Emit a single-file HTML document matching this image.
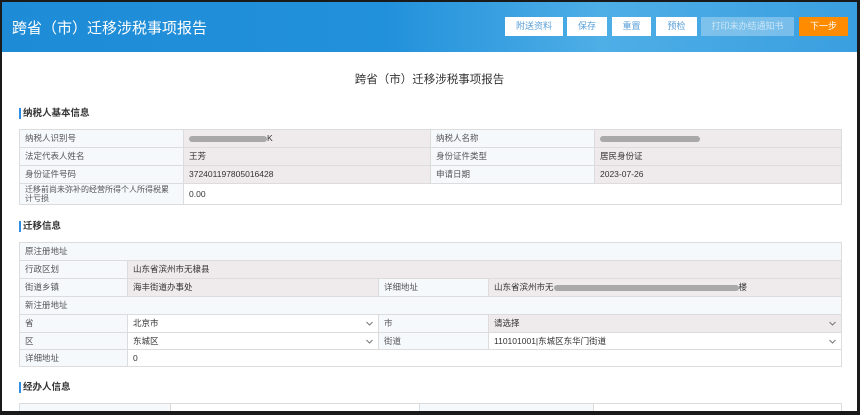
<!DOCTYPE html>
<html><head><meta charset="utf-8"><style>
*{margin:0;padding:0;box-sizing:border-box}
body{width:860px;height:415px;background:#1a1a1a;position:relative;overflow:hidden;font-family:"Liberation Sans","Noto Sans CJK SC",sans-serif}
.page{position:absolute;left:2px;top:2px;width:855px;height:409px;background:#fff;overflow:hidden}
.hdr{position:absolute;left:0;top:0;width:855px;height:50px;background:linear-gradient(90deg,#1e8bd6 0%,#2291db 45%,#4eaee6 70%,#3a9fe0 100%)}
.hdr .t{position:absolute;left:10px;top:15px;color:#fff;font-size:15px}
.btn{position:absolute;top:15px;height:19px;background:#fff;color:#5a9fd8;font-size:9px;text-align:center;line-height:19px}
.abs{position:absolute}
.sec{position:absolute;left:17px;font-size:9.5px;font-weight:bold;color:#333;border-left:2px solid #2f8de4;padding-left:2px;line-height:11px}
.c{position:absolute;border:1px solid #dcdcdc;font-size:8.5px;color:#555;padding-left:5px;display:flex;align-items:center;line-height:9px}
.l{background:#f5f9fc}
.g{background:#efeaeb;color:#333}
.w{background:#fff;color:#333}
.chev{position:absolute;right:5px;top:6px;width:7px;height:5px}
.blur{display:inline-block;height:6px;background:#a9a9a9;border-radius:3px;vertical-align:middle}
</style></head><body>
<div class="page">
<div class="hdr"><div class="t">跨省（市）迁移涉税事项报告</div>
<div class="btn" style="left:503px;width:58px">附送资料</div>
<div class="btn" style="left:565px;width:40px">保存</div>
<div class="btn" style="left:610px;width:39px">重置</div>
<div class="btn" style="left:654px;width:41px">预检</div>
<div class="btn" style="left:699px;width:93px;background:rgba(255,255,255,0.3);color:rgba(255,255,255,0.6)">打印未办结通知书</div>
<div class="btn" style="left:797px;width:49px;background:#ff8c00;color:#fff">下一步</div>
</div>
<div class="abs" style="left:0;width:855px;top:69px;text-align:center;font-size:11.5px;color:#333">跨省（市）迁移涉税事项报告</div>

<div class="sec" style="top:106px">纳税人基本信息</div>
<div class="c l" style="left:17px;top:127px;width:165px;height:19px">纳税人识别号</div>
<div class="c g" style="left:181px;top:127px;width:248px;height:19px"><span class="blur" style="width:78px"></span>K</div>
<div class="c l" style="left:428px;top:127px;width:165px;height:19px">纳税人名称</div>
<div class="c g" style="left:592px;top:127px;width:248px;height:19px"><span class="blur" style="width:100px"></span></div>
<div class="c l" style="left:17px;top:145px;width:165px;height:19px">法定代表人姓名</div>
<div class="c g" style="left:181px;top:145px;width:248px;height:19px">王芳</div>
<div class="c l" style="left:428px;top:145px;width:165px;height:19px">身份证件类型</div>
<div class="c g" style="left:592px;top:145px;width:248px;height:19px">居民身份证</div>
<div class="c l" style="left:17px;top:163px;width:165px;height:19px">身份证件号码</div>
<div class="c g" style="left:181px;top:163px;width:248px;height:19px">372401197805016428</div>
<div class="c l" style="left:428px;top:163px;width:165px;height:19px">申请日期</div>
<div class="c g" style="left:592px;top:163px;width:248px;height:19px">2023-07-26</div>
<div class="c l" style="left:17px;top:181px;width:165px;height:22px;font-size:8px;padding-right:8px">迁移前尚未弥补的经营所得个人所得税累计亏损</div>
<div class="c w" style="left:181px;top:181px;width:659px;height:22px">0.00</div>

<div class="sec" style="top:219px">迁移信息</div>
<div class="c l" style="left:17px;top:240px;width:823px;height:19px">原注册地址</div>
<div class="c l" style="left:17px;top:258px;width:109px;height:19px">行政区划</div>
<div class="c g" style="left:125px;top:258px;width:715px;height:19px">山东省滨州市无棣县</div>
<div class="c l" style="left:17px;top:276px;width:109px;height:19px">街道乡镇</div>
<div class="c g" style="left:125px;top:276px;width:252px;height:19px">海丰街道办事处</div>
<div class="c l" style="left:376px;top:276px;width:111px;height:19px">详细地址</div>
<div class="c g" style="left:486px;top:276px;width:354px;height:19px">山东省滨州市无<span class="blur" style="width:185px"></span>楼</div>
<div class="c l" style="left:17px;top:294px;width:823px;height:19px">新注册地址</div>
<div class="c l" style="left:17px;top:312px;width:109px;height:19px">省</div>
<div class="c w" style="left:125px;top:312px;width:252px;height:19px">北京市<svg class="chev" viewBox="0 0 7 5"><path d="M0.5 1L3.5 4L6.5 1" fill="none" stroke="#777" stroke-width="1"/></svg></div>
<div class="c l" style="left:376px;top:312px;width:111px;height:19px">市</div>
<div class="c g" style="left:486px;top:312px;width:354px;height:19px">请选择<svg class="chev" viewBox="0 0 7 5"><path d="M0.5 1L3.5 4L6.5 1" fill="none" stroke="#777" stroke-width="1"/></svg></div>
<div class="c l" style="left:17px;top:330px;width:109px;height:18px">区</div>
<div class="c w" style="left:125px;top:330px;width:252px;height:18px">东城区<svg class="chev" viewBox="0 0 7 5"><path d="M0.5 1L3.5 4L6.5 1" fill="none" stroke="#777" stroke-width="1"/></svg></div>
<div class="c l" style="left:376px;top:330px;width:111px;height:18px">街道</div>
<div class="c w" style="left:486px;top:330px;width:354px;height:18px">110101001|东城区东华门街道<svg class="chev" viewBox="0 0 7 5"><path d="M0.5 1L3.5 4L6.5 1" fill="none" stroke="#777" stroke-width="1"/></svg></div>
<div class="c l" style="left:17px;top:347px;width:109px;height:18px">详细地址</div>
<div class="c w" style="left:125px;top:347px;width:715px;height:18px">0</div>

<div class="sec" style="top:380px">经办人信息</div>
<div class="c l" style="left:17px;top:401px;width:152px;height:20px"></div>
<div class="c w" style="left:168px;top:401px;width:250px;height:20px"></div>
<div class="c l" style="left:417px;top:401px;width:175px;height:20px"></div>
<div class="c w" style="left:591px;top:401px;width:249px;height:20px"></div>
</div>
</body></html>
